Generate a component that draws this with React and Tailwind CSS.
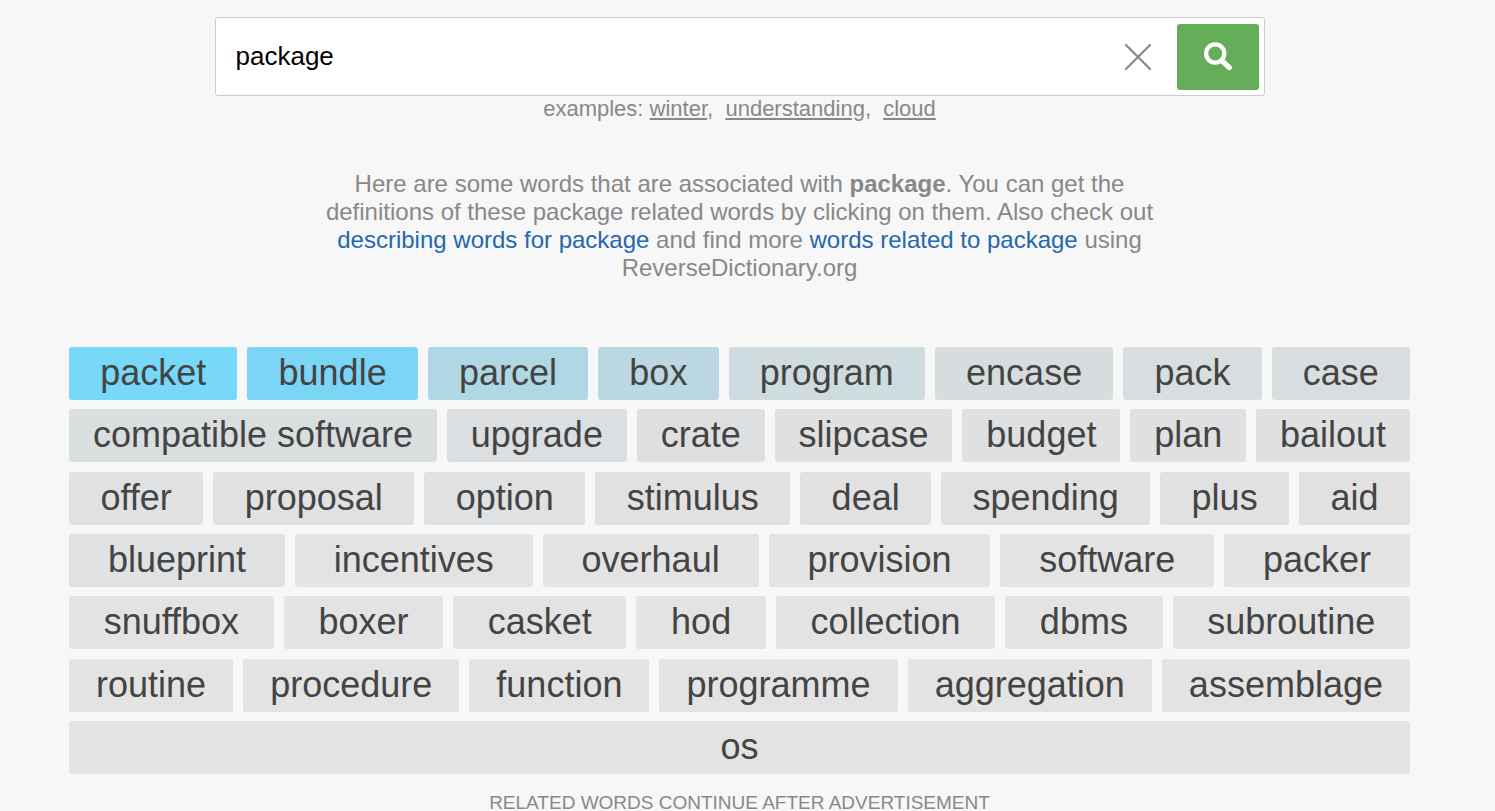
import React, { useState } from "react";
import clsx from "clsx";

const EXAMPLES = ["winter", "understanding", "cloud"];

// ordered by relevance, the closest words get the strongest tint
const WORDS = [
  { text: "packet", tint: "bg-[#77d8f8]" },
  { text: "bundle", tint: "bg-[#7bd6f6]" },
  { text: "parcel", tint: "bg-[#b0d7e4]" },
  { text: "box", tint: "bg-[#bbd8e2]" },
  { text: "program", tint: "bg-[#cfdcdf]" },
  { text: "encase", tint: "bg-[#d7dddf]" },
  { text: "pack", tint: "bg-[#d8dee0]" },
  { text: "case", tint: "bg-[#d8dde0]" },
  { text: "compatible software", tint: "bg-[#d9dfdf]" },
  { text: "upgrade", tint: "bg-[#dbdfe2]" },
  { text: "crate", tint: "bg-[#dedfe1]" },
  { text: "slipcase", tint: "bg-[#dfe0df]" },
  { text: "budget", tint: "bg-[#dfe0e2]" },
  { text: "plan", tint: "bg-[#dfe0e2]" },
  { text: "bailout", tint: "bg-[#dfe0e2]" },
  { text: "offer", tint: "bg-[#e0e1e2]" },
  { text: "proposal", tint: "bg-[#e0e1e2]" },
  { text: "option", tint: "bg-[#e0e1e3]" },
  { text: "stimulus", tint: "bg-[#e1e1e2]" },
  { text: "deal", tint: "bg-[#e1e1e2]" },
  { text: "spending", tint: "bg-[#e1e1e2]" },
  { text: "plus", tint: "bg-[#e1e1e2]" },
  { text: "aid", tint: "bg-[#e1e1e2]" },
  { text: "blueprint", tint: "bg-[#e0e1e3]" },
  { text: "incentives" },
  { text: "overhaul" },
  { text: "provision" },
  { text: "software" },
  { text: "packer" },
  { text: "snuffbox" },
  { text: "boxer" },
  { text: "casket" },
  { text: "hod" },
  { text: "collection" },
  { text: "dbms" },
  { text: "subroutine" },
  { text: "routine" },
  { text: "procedure" },
  { text: "function" },
  { text: "programme" },
  { text: "aggregation" },
  { text: "assemblage" },
  { text: "os" },
];

function SearchBar() {
  const [query, setQuery] = useState("package");

  return (
    <form
      className="flex items-center w-full max-w-[1050px] mx-auto bg-white border border-[#cccccc] rounded-[3px] pt-1.5 pb-[5px] pl-5 pr-[5px]"
      onSubmit={(e) => e.preventDefault()}
    >
      <input
        type="text"
        aria-label="Search for a word"
        className="flex-1 min-w-0 h-16 pb-0.5 text-[26px] text-black bg-transparent outline-none"
        value={query}
        onChange={(e) => setQuery(e.target.value)}
      />
      <button
        type="button"
        aria-label="Clear"
        className="flex items-center justify-center w-[78px] h-16"
        onClick={() => setQuery("")}
      >
        <svg width="28" height="28" viewBox="0 0 28 28" fill="none">
          <path
            d="M2 2L26 26M26 2L2 26"
            stroke="#888888"
            strokeWidth="2.2"
            strokeLinecap="round"
          />
        </svg>
      </button>
      <button
        type="submit"
        aria-label="Search"
        className="flex items-center justify-center w-[82px] h-[66px] rounded-[3px] bg-[#65ad58]"
      >
        <svg width="30" height="30" viewBox="0 0 30 30" fill="none" stroke="#fff">
          <circle cx="12.2" cy="11.5" r="9.1" strokeWidth="4.3" />
          <path d="M19 18.8L26.4 25.6" strokeWidth="5.2" strokeLinecap="round" />
        </svg>
      </button>
    </form>
  );
}

function WordTag({ text, tint = "bg-[#e3e3e3]" }) {
  return (
    <button
      type="button"
      className={clsx(
        "grow h-[53px] px-[23px] pb-px rounded-[3px] text-[36px] leading-[48px] text-[#444444] whitespace-nowrap cursor-pointer",
        tint,
      )}
    >
      {text}
    </button>
  );
}

export default function App() {
  return (
    <div className="min-h-screen bg-[#f7f7f7] pt-[17px] pr-4 text-center text-[#888888] font-['Liberation_Sans',Arial,sans-serif]">
      <header>
        <SearchBar />
        <p className="text-[22px] leading-[26px]">
          examples:{" "}
          {EXAMPLES.map((word, i) => (
            <React.Fragment key={word}>
              {i > 0 && <>,&nbsp; </>}
              <a href={`#${word}`} className="underline underline-offset-2 decoration-2">
                {word}
              </a>
            </React.Fragment>
          ))}
        </p>
      </header>

      <p className="max-w-[840px] mx-auto mt-12 text-2xl leading-7">
        Here are some words that are associated with <b>package</b>. You can get
        the definitions of these package related words by clicking on them. Also
        check out{" "}
        <a href="#describing" className="text-[#2368b0]">
          describing words for package
        </a>{" "}
        and find more{" "}
        <a href="#related" className="text-[#2368b0]">
          words related to package
        </a>{" "}
        using ReverseDictionary.org
      </p>

      <main className="flex flex-wrap content-between gap-x-2.5 gap-y-2 min-h-[427px] mt-[65px] px-[69px]">
        {WORDS.map((word) => (
          <WordTag key={word.text} {...word} />
        ))}
      </main>

      <p className="mt-[18px] text-[19px] leading-[22px] uppercase">
        Related words continue after advertisement
      </p>
    </div>
  );
}
